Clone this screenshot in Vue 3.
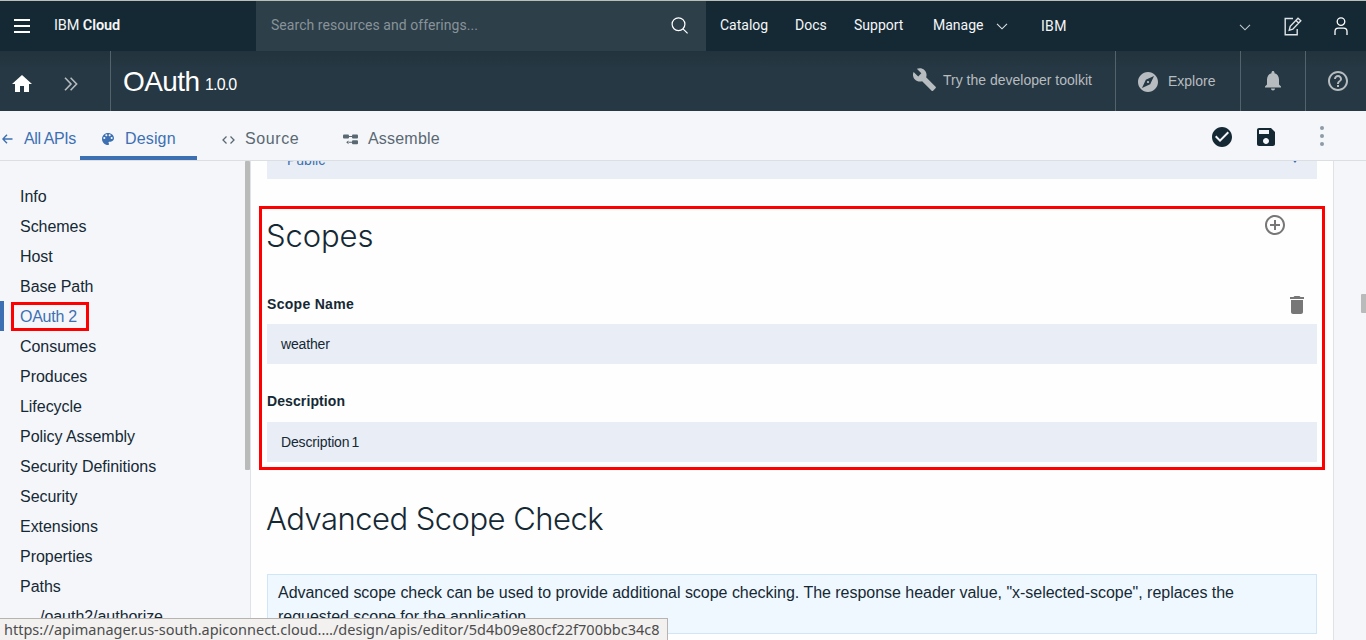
<script setup>
const links = [
  { label: 'Catalog', cls: 'catalog' },
  { label: 'Docs', cls: 'docs' },
  { label: 'Support', cls: 'support' },
  { label: 'Manage', cls: 'manage' },
]
const sections = ['Info', 'Schemes', 'Host', 'Base Path', 'OAuth 2', 'Consumes', 'Produces', 'Lifecycle', 'Policy Assembly', 'Security Definitions', 'Security', 'Extensions', 'Properties', 'Paths']
const active = 'OAuth 2'
</script>

<template>
  <div class="page">
    <header class="top">
      <svg class="burger" width="16" height="14" viewBox="0 0 16 14"><path d="M0 1h16M0 7h16M0 13h16" stroke="#fff" stroke-width="2" /></svg>
      <div class="brand">IBM <b>Cloud</b></div>
      <div class="search">
        <span>Search resources and offerings...</span>
        <svg width="18" height="18" viewBox="0 0 18 18" fill="none" stroke="#fff" stroke-width="1.2"><circle cx="7.5" cy="7.2" r="6.4" /><path d="M12 11.8l4.6 4.6" /></svg>
      </div>
      <nav class="links">
        <span v-for="l in links" :key="l.label" :class="l.cls">{{ l.label }}</span>
        <svg class="chev" width="12" height="7" viewBox="0 0 12 7" fill="none" stroke="#dfe3e6" stroke-width="1.1"><path d="M1 .8l5 5 5-5" /></svg>
        <span class="account">IBM</span>
        <svg class="chev second" width="12" height="7" viewBox="0 0 12 7" fill="none" stroke="#c4cbd0" stroke-width="1.1"><path d="M1 .8l5 5 5-5" /></svg>
        <svg class="edit" width="18" height="19" viewBox="0 0 18 19" fill="none" stroke="#dfe3e6" stroke-width="1.4"><path d="M9 1.5H1.2v16.3h12V12M5.2 13.3l1-4L14 1.2l2.8 2.6-8 8.4zM12 3.4l2.7 2.6" /></svg>
        <svg class="user" width="14" height="19" viewBox="0 0 14 19" fill="none" stroke="#fff" stroke-width="1.3"><circle cx="7" cy="4.6" r="3.8" /><path d="M1 18v-3.500c0-2 1.500-3.300 3.300-3.300h5.400c1.800 0 3.300 1.300 3.300 3.300V18" /></svg>
      </nav>
    </header>

    <div class="sub">
      <div class="crumb">
        <svg class="home" width="20" height="17" viewBox="2 3 20 17"><path d="M10 20v-6h4v6h5v-8h3L12 3 2 12h3v8z" fill="#fff" /></svg>
        <svg width="14" height="14" viewBox="0 0 14 14" fill="none" stroke="#b5bbbf" stroke-width="1.6"><path d="M1 .8l6 6.200-6 6.200M6.600.8l6 6.200-6 6.200" /></svg>
      </div>
      <h1>OAuth</h1><span class="version">1.0.0</span>
      <div class="toolkit">
        <svg width="23" height="23" viewBox="1 1 22.100 22"><path fill="#b7bcc0" d="M22.700 19l-9.100-9.100c.9-2.300.4-5-1.500-6.900-2-2-5-2.400-7.400-1.300L9 6 6 9 1.600 4.700C.4 7.100.9 10.100 2.900 12.100c1.900 1.900 4.600 2.400 6.900 1.500l9.100 9.100c.4.4 1 .4 1.400 0l2.300-2.300c.5-.4.5-1.100.1-1.400z" /></svg>
        <span>Try the developer toolkit</span>
      </div>
      <div class="explore">
        <svg width="20" height="20" viewBox="2 2 20 20"><path fill="#b7bcc0" d="M12 10.900c-.61 0-1.100.49-1.100 1.100s.49 1.100 1.100 1.100 1.100-.49 1.100-1.100-.49-1.100-1.100-1.100zM12 2C6.480 2 2 6.480 2 12s4.480 10 10 10 10-4.480 10-10S17.520 2 12 2zm2.190 12.190L6 18l3.810-8.190L18 6l-3.810 8.190z" /></svg>
        <span>Explore</span>
      </div>
      <div class="bell"><svg width="16" height="19.500" viewBox="4 2.500 16 19.500"><path fill="#b7bcc0" d="M12 22c1.100 0 2-.9 2-2h-4c0 1.100.9 2 2 2zm6-6v-5c0-3.070-1.640-5.640-4.500-6.320V4c0-.83-.67-1.500-1.500-1.500s-1.500.67-1.500 1.500v.68C7.630 5.360 6 7.920 6 11v5l-2 2v1h16v-1l-2-2z" /></svg></div>
      <div class="help"><svg width="20" height="20" viewBox="2 2 20 20"><path fill="#b7bcc0" d="M11 18h2v-2h-2v2zm1-16C6.480 2 2 6.480 2 12s4.480 10 10 10 10-4.480 10-10S17.520 2 12 2zm0 18c-4.410 0-8-3.590-8-8s3.590-8 8-8 8 3.590 8 8-3.590 8-8 8zm0-14c-2.210 0-4 1.790-4 4h2c0-1.100.9-2 2-2s2 .9 2 2c0 2-3 1.750-3 5h2c0-2.250 3-2.500 3-5 0-2.210-1.790-4-4-4z" /></svg></div>
    </div>

    <div class="tabs">
      <div class="back">
        <svg width="11" height="10" viewBox="0 0 11 10" fill="none" stroke="#3d70b2" stroke-width="1.400"><path d="M10.500 5H1M5 .8L.9 5 5 9.200" /></svg>
        <span>All APIs</span>
      </div>
      <div class="tab on">
        <svg width="12" height="12" viewBox="3 3 18 18"><path fill="#3d70b2" d="M12 3c-4.970 0-9 4.030-9 9s4.030 9 9 9c.83 0 1.500-.67 1.500-1.500 0-.39-.15-.74-.39-1.010-.23-.26-.38-.61-.38-.99 0-.83.67-1.500 1.500-1.500H16c2.760 0 5-2.240 5-5 0-4.420-4.030-8-9-8zm-5.500 9c-.83 0-1.500-.67-1.500-1.500S5.670 9 6.500 9 8 9.670 8 10.500 7.330 12 6.500 12zm3-4C8.670 8 8 7.330 8 6.500S8.670 5 9.500 5s1.500.67 1.500 1.500S10.330 8 9.500 8zm5 0c-.83 0-1.500-.67-1.500-1.500S13.670 5 14.500 5s1.500.67 1.500 1.500S15.330 8 14.500 8zm3 4c-.83 0-1.500-.67-1.500-1.500S16.670 9 17.500 9s1.500.67 1.500 1.500-.67 1.500-1.500 1.500z" /></svg>
        <span>Design</span>
      </div>
      <div class="tab source">
        <svg width="13" height="8" viewBox="0 0 13 8" fill="none" stroke="#5a6872" stroke-width="1.300"><path d="M4.500.5L1 4l3.500 3.500M8.500.5L12 4 8.500 7.500" /></svg>
        <span>Source</span>
      </div>
      <div class="tab assemble">
        <svg width="15" height="11" viewBox="0 0 15 11" fill="#5a6872"><rect x="0" y=".5" width="6" height="4" rx="1" /><rect x="9" y=".5" width="6" height="4" rx="1" /><path d="M6 2h3v1H6zM6 7.800h3v1H6z" /><rect x="9" y="6.300" width="6" height="4" rx="1" /><path d="M3.200 8.300L5.500 6.400v3.800z" /></svg>
        <span>Assemble</span>
      </div>
      <div class="actions">
        <svg width="20" height="20" viewBox="2 2 20 20"><path fill="#152934" d="M12 2C6.480 2 2 6.480 2 12s4.480 10 10 10 10-4.480 10-10S17.520 2 12 2zm-2 15l-5-5 1.410-1.410L10 14.170l7.590-7.590L19 8l-9 9z" /></svg>
        <svg class="save" width="18" height="18" viewBox="3 3 18 18"><path fill="#152934" d="M17 3H5c-1.110 0-2 .9-2 2v14c0 1.100.89 2 2 2h14c1.100 0 2-.9 2-2V7l-4-4zm-5 16c-1.660 0-3-1.340-3-3s1.340-3 3-3 3 1.340 3 3-1.340 3-3 3zm3-10H5V5h10v4z" /></svg>
        <svg class="more" width="4" height="20" viewBox="0 0 4 20" fill="#8c9ba5"><circle cx="2" cy="2" r="2" /><circle cx="2" cy="10" r="2" /><circle cx="2" cy="18" r="2" /></svg>
      </div>
    </div>

    <div class="body">
      <aside>
        <ul>
          <li v-for="s in sections" :key="s" :class="{ on: s === active }"><span>{{ s }}</span></li>
          <li class="child"><span>/oauth2/authorize</span></li>
        </ul>
        <i class="thumb"></i>
      </aside>
      <main>
        <div class="select"><span>Public</span><svg width="8" height="5" viewBox="0 0 8 5"><path d="M0 0h8L4 5z" fill="#3d70b2" /></svg></div>
        <div class="head">
          <h2>Scopes</h2>
          <svg width="20" height="20" viewBox="2 2 20 20"><path fill="#777" d="M13 7h-2v4H7v2h4v4h2v-4h4v-2h-4V7zm-1-5C6.480 2 2 6.480 2 12s4.480 10 10 10 10-4.480 10-10S17.520 2 12 2zm0 18c-4.410 0-8-3.590-8-8s3.590-8 8-8 8 3.590 8 8-3.590 8-8 8z" /></svg>
        </div>
        <div class="label name">
          <span>Scope Name</span>
          <svg width="14" height="18" viewBox="5 3 14 18"><path fill="#777" d="M6 19c0 1.100.9 2 2 2h8c1.100 0 2-.9 2-2V7H6v12zM19 4h-3.500l-1-1h-5l-1 1H5v2h14V4z" /></svg>
        </div>
        <div class="field weather">weather</div>
        <div class="label desc"><span>Description</span></div>
        <div class="field description">Description 1</div>
        <h2 class="advanced">Advanced Scope Check</h2>
        <div class="note"><span class="l1">Advanced scope check can be used to provide additional scope checking. The response header value, "x-selected-scope", replaces the</span><br><span>requested scope for the application.</span></div>
      </main>
      <div class="gutter"></div>
    </div>

    <i class="pagethumb"></i>
    <div class="mark mark-scopes"></div>
    <div class="mark mark-oauth"></div>
    <div class="status"><span>https://apimanager.us-south.apiconnect.cloud.…/design/apis/editor/5d4b09e80cf22f700bbc34c8</span></div>
  </div>
</template>

<style>
body { margin: 0; overflow: hidden; }
</style>

<style scoped>
.page { position: relative; width: 1366px; height: 640px; overflow: hidden; background: #f4f6fa; color: #152934; font-family: "Liberation Sans", Arial, sans-serif; font-size: 16px; white-space: nowrap; box-sizing: border-box; }
.page * { box-sizing: border-box; }
svg { display: block; flex: none; }
span { flex: none; }

.top { display: flex; height: 51px; border-top: 1px solid #b9beb8; background: #152934; color: #f4f6f8; font-family: Roboto, sans-serif; font-size: 14px; }
.burger { margin: 18px 0 0 14px; }
.brand { width: 202px; margin-left: 24px; line-height: 49px; font-size: 14.500px; letter-spacing: -.1px; }
.brand b { font-weight: 600; }
.search { display: flex; width: 450px; padding: 0 17px 0 15px; justify-content: space-between; background: #2d3f49; color: #889399; line-height: 48px; letter-spacing: .05px; }
.search svg { margin-top: 16px; }
.links { display: flex; flex: 1; padding-left: 14px; line-height: 48px; }
.catalog { width: 75px; }
.docs { width: 59px; }
.support { width: 79px; }
.manage { width: 63px; }
.chev { margin-top: 22px; }
.account { width: 198px; margin-left: 33px; line-height: 50px; letter-spacing: .3px; }
.chev.second { margin-top: 23px; }
.edit { margin: 16px 0 0 33px; }
.user { margin: 16px 0 0 32px; }

.sub { display: flex; height: 60px; background: linear-gradient(#22333d, #263843 30%); color: #fff; }
.crumb { display: flex; width: 111px; padding: 26px 0 0 64px; border-right: 1px solid #53626b; }
.crumb .home { margin: -2px 32px 0 -52px; }
h1 { width: 82px; margin: 0 0 0 12px; font-size: 28px; font-weight: 400; line-height: 61px; letter-spacing: -.6px; }
.version { line-height: 67px; letter-spacing: -.85px; }
.toolkit, .explore { display: flex; color: #b7bcc0; font-size: 14px; line-height: 58px; }
.toolkit { width: 203px; margin-left: auto; border-right: 1px solid #53626b; }
.toolkit svg { margin: 17px 7px 0 0; }
.explore { width: 125px; padding-left: 22px; border-right: 1px solid #53626b; line-height: 60px; }
.explore svg { margin: 21px 10px 0 0; }
.bell { width: 65px; padding: 20px 0 0 24px; border-right: 1px solid #53626b; }
.help { width: 60px; padding: 20px 0 0 22px; }

.tabs { display: flex; height: 50px; border-bottom: 1px solid #dcdfe2; color: #5a6872; line-height: 56px; }
.back { display: flex; width: 80px; padding-left: 2px; color: #3d70b2; letter-spacing: -.42px; }
.back svg { margin: 23px 11px 0 0; }
.tab { display: flex; letter-spacing: .3px; }
.tab.on { width: 117px; height: 49px; padding-left: 22px; border-bottom: 4px solid #3d70b2; color: #3d70b2; letter-spacing: .15px; }
.tab.on svg { margin: 22px 11px 0 0; }
.source { width: 121px; margin-left: 25px; letter-spacing: .6px; }
.source svg { margin: 25px 10px 0 0; }
.assemble { letter-spacing: .2px; }
.assemble svg { margin: 23px 10px 0 0; }
.actions { display: flex; width: 154px; margin-left: auto; padding-top: 16px; }
.actions .save { margin: 1px 0 0 25px; }
.actions .more { margin: -1px 0 0 45px; }

.body { display: flex; height: 479px; }
aside { position: relative; flex: none; width: 251px; height: 479px; border-right: 1px solid #dfe3e8; overflow: hidden; }
ul { margin: 20px 0 0; padding: 0; list-style: none; line-height: 30px; letter-spacing: -.04px; }
li { height: 30px; padding: 1px 0 0 20px; }
li.on { padding-left: 16px; border-left: 4px solid #3d70b2; color: #3d70b2; letter-spacing: -.25px; }
li.child { padding-left: 40px; }
.thumb { position: absolute; top: 0; left: 245px; width: 5px; height: 309px; background: #b9bbbb; border-radius: 1px; }
main { width: 1082px; height: 479px; padding: 0 16px; overflow: hidden; background: #fefefe; }
.gutter { flex: 1; border-left: 1px solid #dfe3e8; }
.select { display: flex; height: 40px; margin-top: -22px; padding: 0 18px 0 20px; justify-content: space-between; background: #e9eef6; color: #3d70b2; font-size: 14px; line-height: 43px; }
.select svg { margin-top: 19px; }
.head { display: flex; height: 74px; margin-top: 35px; justify-content: space-between; }
.head svg { margin: 1px 32px 0 0; }
h2 { margin: 0 0 0 -1px; font-family: Inter, sans-serif; font-size: 31px; font-weight: 300; line-height: 44px; letter-spacing: -.1px; }
.label { display: flex; justify-content: space-between; font-size: 14px; font-weight: 700; line-height: 32px; }
.label.name { height: 36px; letter-spacing: .3px; }
.label svg { margin: 8px 13px 0 0; }
.field { height: 40px; padding-left: 14px; background: #e9eef6; font-size: 14px; line-height: 40px; letter-spacing: -.15px; }
.description { word-spacing: -1.500px; }
.label.desc { height: 37px; margin-top: 21px; letter-spacing: .1px; }
.advanced { height: 77px; margin-top: 35px; letter-spacing: -.52px; }
.note { height: 60px; padding: 6px 10px; border: 1px solid #d0e6f8; background: #f0f8ff; line-height: 24px; letter-spacing: -.025px; }
.pagethumb { position: absolute; right: 0; top: 294px; width: 5px; height: 19px; background: #b9bbbb; border-radius: 1px 0 0 1px; }
.mark { position: absolute; border: 3px solid #f00; }
.mark-scopes { left: 259px; top: 206px; width: 1066px; height: 264px; }
.mark-oauth { left: 11px; top: 302px; width: 78px; height: 29px; }
.status { position: absolute; left: 0; bottom: 0; width: 668px; height: 22px; padding-left: 4px; border-top: 1px solid #b6b3b0; border-right: 1px solid #b6b3b0; background: #f2f1f0; color: #4c4c4c; font-family: "Noto Sans", sans-serif; font-size: 14.500px; line-height: 20px; }
</style>
